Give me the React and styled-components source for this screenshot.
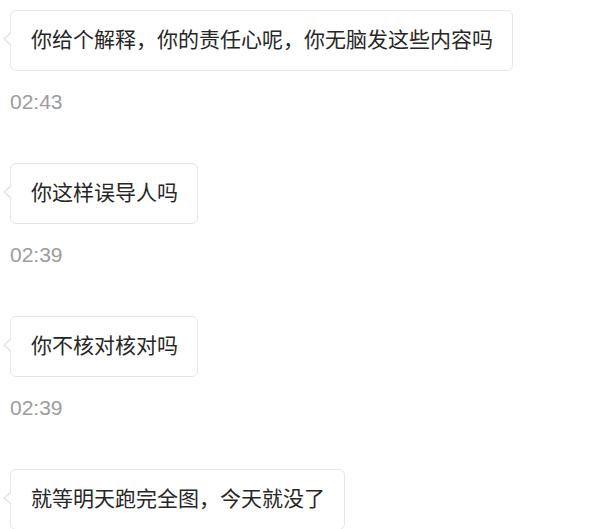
import styled, { createGlobalStyle } from "styled-components";

const GlobalStyle = createGlobalStyle`
  body {
    margin: 0;
    background: #ffffff;
    font-family: "Liberation Sans", "Noto Sans CJK SC", sans-serif;
  }
`;

const Thread = styled.div`
  display: flex;
  flex-direction: column;
  align-items: flex-start;
  padding: 10px 0 0 10px;
`;

const Message = styled.div`
  display: flex;
  flex-direction: column;
  align-items: flex-start;
  margin-bottom: 49px;
`;

const Bubble = styled.div`
  position: relative;
  box-sizing: border-box;
  height: 61px;
  display: flex;
  align-items: center;
  padding: 0 19px 5px 20px;
  background: #fff;
  border: 1px solid #e6e6e6;
  border-radius: 6px;
  font-family: "Noto Sans CJK SC", "Liberation Sans", sans-serif;
  font-size: 21px;
  color: #262626;
  white-space: nowrap;

  &::before,
  &::after {
    content: "";
    position: absolute;
    top: 21px;
    width: 0;
    height: 0;
    border-style: solid;
  }

  &::before {
    left: -8px;
    border-width: 7px 8px 7px 0;
    border-color: transparent #e2e2e2 transparent transparent;
  }

  &::after {
    left: -6px;
    top: 22px;
    border-width: 6px 7px 6px 0;
    border-color: transparent #fff transparent transparent;
  }
`;

const Time = styled.div`
  margin-top: 19px;
  font-family: "Liberation Sans", Arial, sans-serif;
  font-size: 21px;
  line-height: 24px;
  color: #9c9c9c;
`;

const messages = [
  { text: "你给个解释，你的责任心呢，你无脑发这些内容吗", time: "02:43" },
  { text: "你这样误导人吗", time: "02:39" },
  { text: "你不核对核对吗", time: "02:39" },
  { text: "就等明天跑完全图，今天就没了", time: null },
];

export default function App() {
  return (
    <>
      <GlobalStyle />
      <Thread>
        {messages.map((m, i) => (
          <Message key={i}>
            <Bubble>{m.text}</Bubble>
            {m.time && <Time>{m.time}</Time>}
          </Message>
        ))}
      </Thread>
    </>
  );
}
